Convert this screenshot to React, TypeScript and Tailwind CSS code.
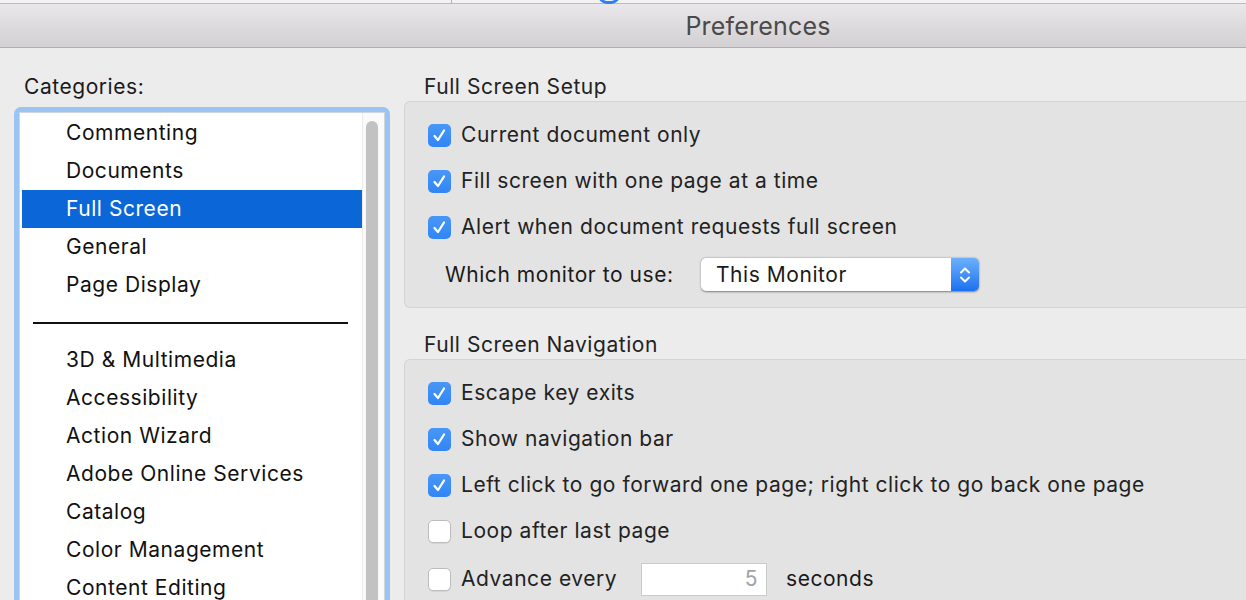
import React from "react";

const topCategories = ["Commenting", "Documents", "Full Screen", "General", "Page Display"];
const moreCategories = [
  "3D & Multimedia",
  "Accessibility",
  "Action Wizard",
  "Adobe Online Services",
  "Catalog",
  "Color Management",
  "Content Editing",
];

function Checkbox({ checked }: { checked: boolean }) {
  if (!checked) {
    return (
      <span className="block h-[23px] w-[23px] shrink-0 rounded-[5px] border border-[#bdbdbd] bg-white shadow-[0_1px_0_rgba(0,0,0,0.06)]" />
    );
  }
  return (
    <span className="flex h-[23px] w-[23px] shrink-0 items-center justify-center rounded-[5px] bg-gradient-to-b from-[#4896f7] to-[#3186f4]">
      <svg width="23" height="23" viewBox="0 0 23 23">
        <path
          d="M6.5 12 L10 16 L16 6.5"
          fill="none"
          stroke="white"
          strokeWidth="2.3"
          strokeLinecap="round"
          strokeLinejoin="round"
        />
      </svg>
    </span>
  );
}

function CheckRow({ checked, label }: { checked: boolean; label: string }) {
  return (
    <div className="flex h-[46px] items-center gap-[10px]">
      <Checkbox checked={checked} />
      <span>{label}</span>
    </div>
  );
}

export default function App() {
  return (
    <div className="h-[600px] w-[1246px] overflow-hidden bg-[#ececec] font-['Inter','Liberation_Sans',sans-serif] text-[21px] tracking-[0.55px] text-[#1e1e1e]">
      {/* strip of the window behind */}
      <div className="relative h-[4px] border-b border-[#bcbcbc] bg-[#f2f2f2]">
        <div className="absolute left-[451px] top-0 h-[4px] w-px bg-[#b5b5b5]" />
        <div className="absolute left-[598px] top-[-14px] h-[18px] w-[22px] rounded-full border-[3px] border-[#2f7ff0]" />
      </div>

      {/* title bar */}
      <div className="flex h-[44px] items-center justify-center border-b border-[#b0b0b0] bg-gradient-to-b from-[#e9e7e9] to-[#d2d0d2] pl-[270px] pt-[3px] text-[25px] tracking-[0.2px] text-[#4a4a4a]">
        Preferences
      </div>

      <div className="flex">
        {/* categories */}
        <div className="w-[404px] shrink-0 pl-[14px] pt-[25px]">
          <div className="h-[28px] pl-[10px] leading-[28px] text-[#1a1a1a]">Categories:</div>
          <div className="mt-[6px] h-[520px] w-[376px] rounded-[7px] border-[5px] border-[#9cc4f2]">
            <div className="flex h-full border border-[#cfd6df] bg-white pl-[2px]">
              <div className="flex-1 pt-[1px] text-[#111]">
                {topCategories.map((c) => (
                  <div
                    key={c}
                    className={
                      c === "Full Screen"
                        ? "flex h-[38px] items-center bg-[#0b67d8] pl-[44px] text-white"
                        : "flex h-[38px] items-center pl-[44px]"
                    }
                  >
                    {c}
                  </div>
                ))}
                <div className="flex h-[37px] items-center pl-[11px] pr-[14px]">
                  <div className="h-[2px] w-full bg-[#111]" />
                </div>
                {moreCategories.map((c) => (
                  <div key={c} className="flex h-[38px] items-center pl-[44px]">
                    {c}
                  </div>
                ))}
              </div>
              <div className="w-[22px] shrink-0 border-l border-[#ececec] bg-[#fafafa] px-[3px] pt-[8px]">
                <div className="h-[520px] w-[12px] rounded-full bg-[#c2c2c2]" />
              </div>
            </div>
          </div>
        </div>

        {/* settings */}
        <div className="flex-1 pt-[25px] text-[#222]">
          <div className="h-[28px] pl-[20px] leading-[28px]">Full Screen Setup</div>
          <div className="h-[207px] rounded-l-[6px] border border-r-0 border-[#d4d4d4] bg-[#e3e3e3] pl-[23px] pt-[10px]">
            <CheckRow checked label="Current document only" />
            <CheckRow checked label="Fill screen with one page at a time" />
            <CheckRow checked label="Alert when document requests full screen" />
            <div className="mt-[8px] flex h-[33px] items-center pl-[17px]">
              <span className="w-[256px] text-[#1a1a1a]">Which monitor to use:</span>
              <div className="flex h-[33px] w-[278px] rounded-[5px] bg-white shadow-[0_0.5px_2px_rgba(0,0,0,0.45)]">
                <span className="flex flex-1 items-center pl-[15px] text-[#1a1a1a]">This Monitor</span>
                <span className="flex w-[28px] items-center justify-center rounded-r-[5px] bg-gradient-to-b from-[#6cb0fa] to-[#1a70f0]">
                  <svg width="14" height="22" viewBox="0 0 14 22">
                    <path d="M3 8.5 L7 4.5 L11 8.5" fill="none" stroke="white" strokeWidth="2" strokeLinecap="round" strokeLinejoin="round" />
                    <path d="M3 13.5 L7 17.5 L11 13.5" fill="none" stroke="white" strokeWidth="2" strokeLinecap="round" strokeLinejoin="round" />
                  </svg>
                </span>
              </div>
            </div>
          </div>

          <div className="mt-[23px] h-[28px] pl-[20px] leading-[28px]">Full Screen Navigation</div>
          <div className="h-[260px] rounded-l-[6px] border border-r-0 border-[#d4d4d4] bg-[#e3e3e3] pl-[23px] pt-[10px]">
            <CheckRow checked label="Escape key exits" />
            <CheckRow checked label="Show navigation bar" />
            <CheckRow checked label="Left click to go forward one page; right click to go back one page" />
            <CheckRow checked={false} label="Loop after last page" />
            <div className="mt-[8px] flex h-[34px] items-center">
              <div className="flex w-[213px] items-center gap-[10px]">
                <Checkbox checked={false} />
                <span>Advance every</span>
              </div>
              <div className="flex h-[33px] w-[126px] items-center justify-end border border-[#cbcbcb] bg-white pr-[8px] text-[#a3a3a3]">
                5
              </div>
              <span className="ml-[19px] text-[#1a1a1a]">seconds</span>
            </div>
          </div>
        </div>
      </div>
    </div>
  );
}
